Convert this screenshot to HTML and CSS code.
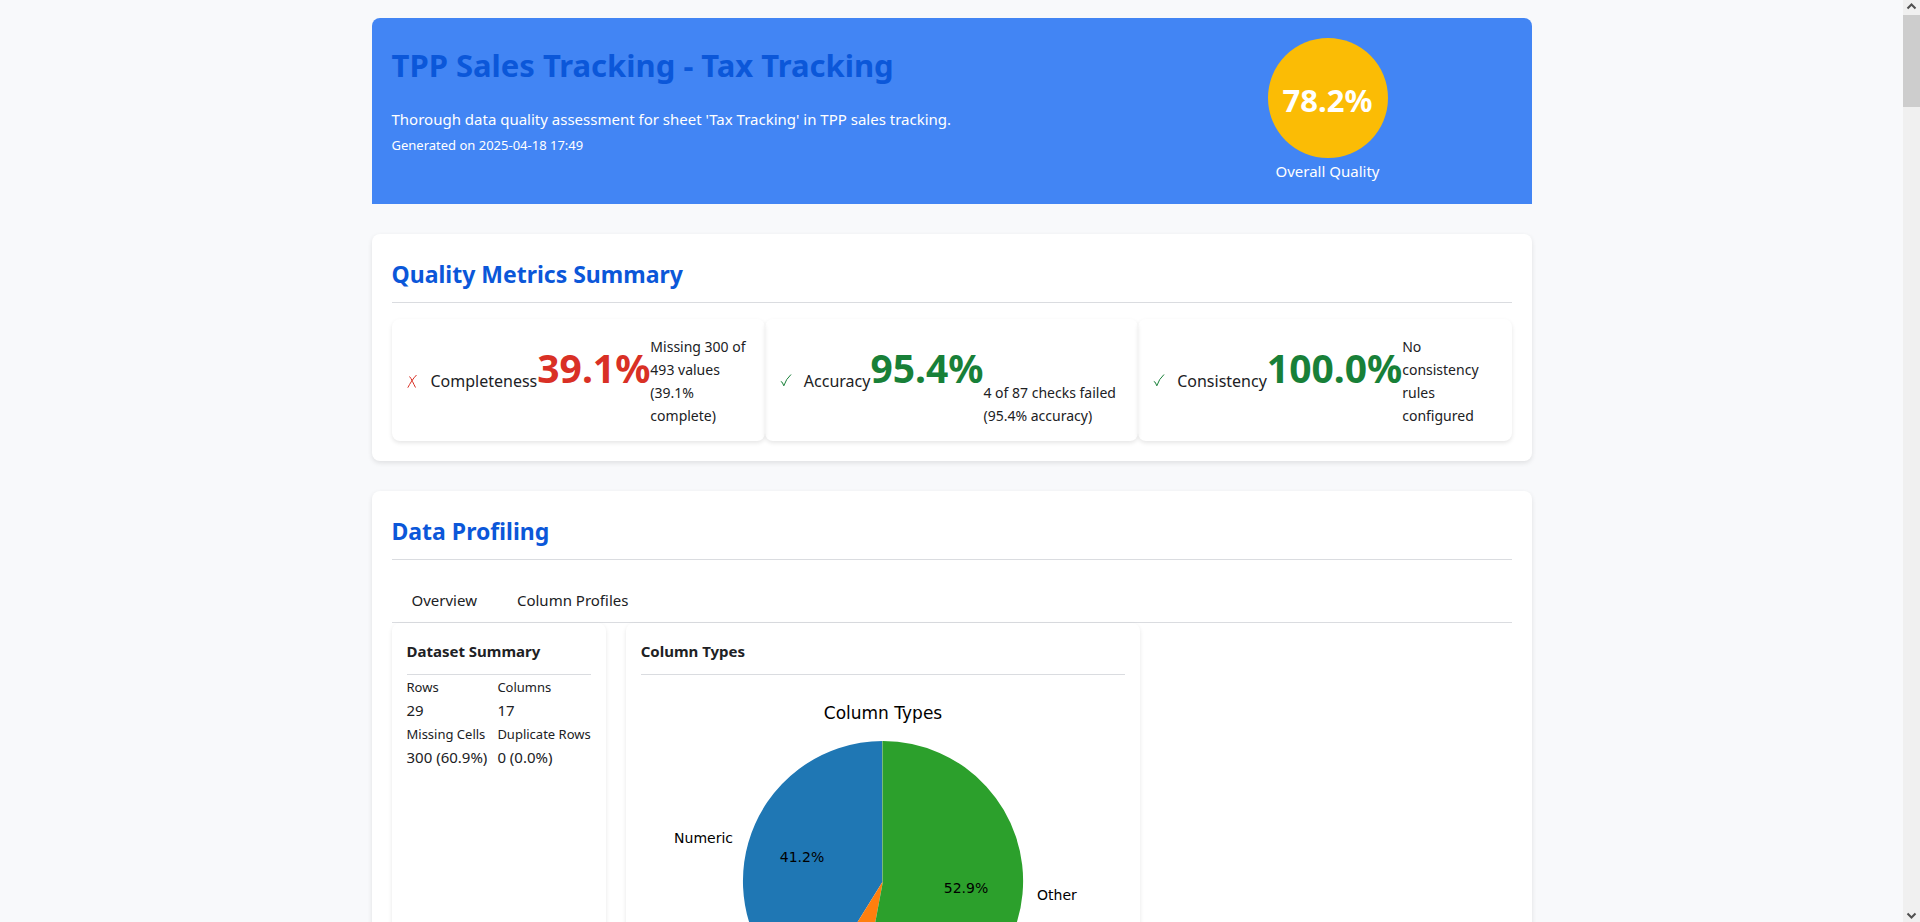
FILE: index.html
```html
<!DOCTYPE html>
<html lang="en">
<head>
<meta charset="utf-8">
<title>TPP Sales Tracking - Tax Tracking</title>
<link rel="stylesheet" href="styles.css">
</head>
<body>
<div class="window">
  <main class="container">
    <header class="report-header">
      <div>
        <h1 class="report-title">TPP Sales Tracking - Tax Tracking</h1>
        <p class="report-description">Thorough data quality assessment for sheet 'Tax Tracking' in TPP sales tracking.</p>
        <p class="report-date">Generated on 2025-04-18 17:49</p>
      </div>
      <div class="score">
        <div class="score-circle">78.2%</div>
        <div class="score-label">Overall Quality</div>
      </div>
    </header>

    <section class="panel">
      <h2 class="panel-title">Quality Metrics Summary</h2>
      <div class="metrics">
        <article class="metric bad">
          <h3 class="metric-name"><svg class="metric-icon" viewBox="0 0 14 18" aria-hidden="true"><path d="M2.5 4.5C4.5 6.500 6.500 12 8.500 15.500M9.500 3C6 6.500 3 11.500 0.800 15.700"/></svg>Completeness</h3>
          <div class="metric-value">39.1%</div>
          <p class="metric-details">Missing 300 of 493 values (39.1% complete)</p>
        </article>
        <article class="metric good">
          <h3 class="metric-name"><svg class="metric-icon" viewBox="0 0 14 18" aria-hidden="true"><path d="M0.800 9.500Q2.200 9 3.800 13.800Q6 7 11 2.500"/></svg>Accuracy</h3>
          <div class="metric-value">95.4%</div>
          <p class="metric-details">4 of 87 checks failed (95.4% accuracy)</p>
        </article>
        <article class="metric good">
          <h3 class="metric-name"><svg class="metric-icon" viewBox="0 0 14 18" aria-hidden="true"><path d="M0.800 9.500Q2.200 9 3.800 13.800Q6 7 11 2.500"/></svg>Consistency</h3>
          <div class="metric-value">100.0%</div>
          <p class="metric-details">No consistency rules configured</p>
        </article>
      </div>
    </section>

    <section class="panel">
      <h2 class="panel-title">Data Profiling</h2>
      <div class="tabs" role="tablist">
        <button class="tab" type="button" role="tab" aria-selected="true">Overview</button>
        <button class="tab" type="button" role="tab" aria-selected="false">Column Profiles</button>
      </div>
      <div class="cards">
        <article class="card">
          <h3 class="card-title">Dataset Summary</h3>
          <div class="stats">
            <div><div class="stat-label">Rows</div><div class="stat-value">29</div></div>
            <div><div class="stat-label">Columns</div><div class="stat-value">17</div></div>
            <div><div class="stat-label">Missing Cells</div><div class="stat-value">300 (60.9%)</div></div>
            <div><div class="stat-label">Duplicate Rows</div><div class="stat-value">0 (0.0%)</div></div>
          </div>
        </article>
        <article class="card">
          <h3 class="card-title">Column Types</h3>
          <svg class="chart" viewBox="0 0 484 380" width="484" role="img" aria-label="Column types pie chart">
            <path fill="#1f77b4" d="M242 206V66A140 140 0 0 0 168.200 325Z"/>
            <path fill="#ff7f0e" d="M242 206L168.200 325A140 140 0 0 0 216.300 343.600Z"/>
            <path fill="#2ca02c" d="M242 206L216.300 343.600A140 140 0 1 0 242 66Z"/>
            <path class="chart-seam" d="M241.500 66V206"/>
            <text class="chart-title" x="242" y="44" text-anchor="middle">Column Types</text>
            <text class="chart-label" x="92" y="168" text-anchor="end">Numeric</text>
            <text class="chart-label" x="396" y="225">Other</text>
            <text class="chart-label" x="161" y="187" text-anchor="middle">41.2%</text>
            <text class="chart-label" x="325" y="218" text-anchor="middle">52.9%</text>
          </svg>
        </article>
      </div>
    </section>
  </main>
  <div class="scrollbar" aria-hidden="true">
    <svg class="scroll-arrow" viewBox="0 0 17 15"><path d="M4.500 8.500L8.500 4.500L12.500 8.500"/></svg>
    <div class="scroll-thumb"></div>
    <svg class="scroll-arrow scroll-down" viewBox="0 0 17 15"><path d="M4.500 6.500L8.500 10.500L12.500 6.500"/></svg>
  </div>
</div>
</body>
</html>
```
FILE: styles.css
```css
* { box-sizing: border-box; }

body {
  margin: 0;
  background: #f8f9fb;
  color: #202124;
  font-family: "Noto Sans", "Open Sans", sans-serif;
  font-size: 15px;
  line-height: 26px;
}

h1, h2, h3, p { margin: 0; }

.window {
  display: grid;
  grid-template-columns: 1fr 17px;
  grid-template-rows: 100%;
  height: 100vh;
  overflow: hidden;
}

.container {
  width: 100%;
  max-width: 1200px;
  margin: 0 auto;
  padding: 18px 20px;
}

.report-header {
  display: grid;
  grid-template-columns: 2fr 1fr;
  gap: 16px;
  padding: 20px;
  margin-bottom: 30px;
  border-radius: 8px 8px 0 0;
  background: #4285f4;
  color: #fff;
}

.report-title {
  margin-bottom: 14px;
  color: #0b57d9;
  font-size: 31px;
  line-height: 54px;
}

.report-description { font-size: 15px; }
.report-date { font-size: 13px; }

.score {
  display: flex;
  flex-direction: column;
  align-items: center;
}

.score-circle {
  display: flex;
  align-items: center;
  justify-content: center;
  width: 120px;
  height: 120px;
  padding-top: 4px;
  border-radius: 50%;
  background: #fbbc05;
  font-size: 31px;
  font-weight: 700;
}

.panel {
  padding: 20px;
  margin-bottom: 30px;
  border-radius: 8px;
  background: #fff;
  box-shadow: 0 2px 5px rgba(0, 0, 0, 0.1);
}

.panel-title {
  margin-bottom: 16px;
  padding-bottom: 8px;
  border-bottom: 1px solid #dadce0;
  color: #0b57d9;
  font-size: 23px;
  line-height: 40px;
}

.metrics {
  display: grid;
  grid-template-columns: repeat(3, 1fr);
}

.metric {
  display: flex;
  align-items: center;
  padding: 16px 15px 14px;
  border-radius: 8px;
  box-shadow: 0 2px 4px rgba(0, 0, 0, 0.1);
}

.metric-name {
  display: flex;
  align-items: center;
  gap: 10px;
  font-size: 16px;
  font-weight: 400;
}

.metric-icon {
  width: 14px;
  height: 18px;
  fill: none;
  stroke: currentColor;
}

.metric-value {
  font-size: 39px;
  font-weight: 700;
  line-height: 60px;
  padding-bottom: 26px;
}

.metric-details {
  align-self: flex-end;
  font-size: 14px;
  line-height: 23px;
}

.bad .metric-icon, .bad .metric-value { color: #d93025; }
.good .metric-icon, .good .metric-value { color: #188038; }

.tabs {
  display: flex;
  border-bottom: 1px solid #dadce0;
}

.tab {
  padding: 11px 20px 9px;
  border: 0;
  background: none;
  color: inherit;
  font: inherit;
  cursor: pointer;
}

.cards {
  display: flex;
  gap: 20px;
}

.card {
  padding: 15px;
  border-radius: 8px;
  box-shadow: 0 2px 4px rgba(0, 0, 0, 0.1);
}

.card-title {
  padding-bottom: 10px;
  border-bottom: 1px solid #dadce0;
  font-size: 15px;
  line-height: 26px;
}

.stats {
  display: grid;
  grid-template-columns: auto auto;
  column-gap: 10px;
}

.stat-label { font-size: 13px; line-height: 24px; }
.stat-value { font-size: 15px; line-height: 23px; }

.chart {
  display: block;
  max-width: 100%;
  font-family: "DejaVu Sans", sans-serif;
}

.chart-title { font-size: 17px; }
.chart-label { font-size: 14px; }
.chart-seam { stroke: #7ab87a; stroke-width: 1; }

.scrollbar {
  display: flex;
  flex-direction: column;
  background: #f0f0f0;
}

.scroll-arrow {
  width: 17px;
  height: 15px;
  fill: none;
  stroke: #505050;
  stroke-width: 2;
}

.scroll-thumb {
  height: 10%;
  background: #cdcdcd;
}

.scroll-down { margin-top: auto; }
```
